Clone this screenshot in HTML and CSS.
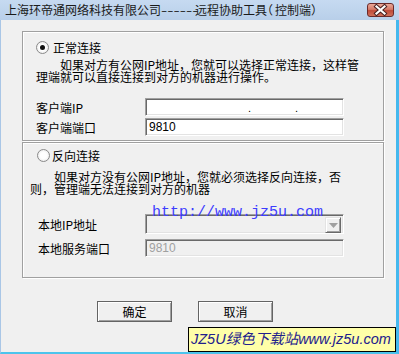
FILE: index.html
```html
<!DOCTYPE html>
<html>
<head>
<meta charset="utf-8">
<link rel="stylesheet" href="styles.css">
</head>
<body>
<div class="window">
  <div class="titlebar">
    <span class="title">上海环帝通网络科技有限公司<span class="dash">------</span>远程协助工具<span class="po">（</span>控制端）</span>
    <div class="close">
      <svg width="27" height="14" viewBox="0 0 27 14">
        <path d="M9.5 3.5 L17.5 10.5 M17.5 3.5 L9.5 10.5" stroke="#4a2222" stroke-width="4.2" stroke-linecap="square"/>
        <path d="M9.5 3.5 L17.5 10.5 M17.5 3.5 L9.5 10.5" stroke="#fff" stroke-width="2.2" stroke-linecap="square"/>
      </svg>
    </div>
  </div>
  <div class="client">
    <div class="group g1">
      <div class="radio-row"><span class="radio checked"></span><span class="rlabel">正常连接</span></div>
      <p class="desc">　　如果对方有公网IP地址，您就可以选择正常连接，这样管<br>理端就可以直接连接到对方的机器进行操作。</p>
      <div class="field f1"><span class="label">客户端IP</span><div class="input ip"><span class="dot d1">.</span><span class="dot d2">.</span></div></div>
      <div class="field f2"><span class="label">客户端端口</span><div class="input">9810</div></div>
    </div>
    <div class="group g2">
      <div class="radio-row"><span class="radio"></span><span class="rlabel">反向连接</span></div>
      <p class="desc">　　如果对方没有公网IP地址，您就必须选择反向连接，否<br>则，管理端无法连接到对方的机器</p>
      <div class="field f3"><span class="label">本地IP地址</span><div class="combo"><div class="cbtn"><svg width="9" height="5" viewBox="0 0 9 5"><path d="M0 0 H9 L4.5 5 Z" fill="#a0a0a0"/></svg></div></div></div>
      <div class="field f4"><span class="label">本地服务端口</span><div class="input disabled">9810</div></div>
    </div>
    <div class="buttons">
      <div class="btn">确定</div>
      <div class="btn">取消</div>
    </div>
    <div class="url">http://www.jz5u.com</div>
    <div class="wm">JZ5U绿色下载站www.jz5u.com</div>
  </div>
</div>
</body>
</html>
```
FILE: styles.css
```css
html, body {
  margin: 0;
  padding: 0;
  background: #f0f0f0;
}
body {
  width: 399px;
  height: 354px;
  overflow: hidden;
  font-family: "Noto Sans CJK SC", "Liberation Sans", sans-serif;
  font-size: 12px;
  color: #000;
}
.window {
  width: 399px;
  height: 354px;
  display: flex;
  flex-direction: column;
  box-sizing: border-box;
}
.titlebar {
  height: 20px;
  flex: none;
  display: flex;
  align-items: center;
  justify-content: space-between;
  background: linear-gradient(#c6daf1, #b8cfe9);
  padding-left: 5px;
  padding-right: 5px;
  box-sizing: border-box;
}
.title {
  font-size: 12px;
  line-height: 20px;
  color: #1a1a1a;
  white-space: nowrap;
}
.dash {
  display: inline-block;
  transform: scaleX(1.5);
  transform-origin: left center;
  margin-right: 9px;
}
.po {
  font-feature-settings: "halt" 1;
  padding-right: 2px;
}
.close {
  width: 27px;
  height: 14px;
  box-sizing: border-box;
  border: 1px solid #6b2a2a;
  border-radius: 3px;
  background: linear-gradient(#eaa898 0%, #d67a68 45%, #c04a38 55%, #d0705a 100%);
  display: flex;
  align-items: center;
  justify-content: center;
  overflow: hidden;
}
.close svg { display: block; margin: -1px; }
.client {
  flex: 1;
  position: relative;
  background: #f0f0f0;
  border-left: 1px solid #a9c6e6;
  border-right: 3px solid #45b8ee;
  border-bottom: 2px solid #4cc4ec;
  padding-top: 11px;
  padding-left: 21px;
  box-sizing: border-box;
}
.group {
  width: 362px;
  box-sizing: border-box;
  border: 1px solid #a0a0a0;
  box-shadow: inset 1px 1px #fff, 1px 1px #fff;
  display: flex;
  flex-direction: column;
}
.g1 { height: 110px; padding-top: 9px; }
.g2 { height: 136px; padding-top: 6px; margin-top: 1px; }
.radio-row {
  display: flex;
  align-items: center;
  height: 13px;
  padding-left: 13px;
}
.g2 .radio-row { padding-left: 14px; }
.radio {
  width: 13px;
  height: 13px;
  box-sizing: border-box;
  border-radius: 50%;
  border: 1px solid #8a8a8a;
  background: radial-gradient(circle at 50% 50%, #ffffff 40%, #e2e2e2 100%);
  position: relative;
  flex: none;
}
.radio.checked::after {
  content: "";
  position: absolute;
  left: 3px;
  top: 3px;
  width: 5px;
  height: 5px;
  border-radius: 50%;
  background: #111;
}
.rlabel {
  margin-left: 4px;
  line-height: 13px;
}
.g2 .rlabel { margin-left: 2px; }
.desc {
  margin: 5px 0 0 0;
  padding-left: 13px;
  line-height: 12px;
  white-space: nowrap;
}
.g2 .desc { margin-top: 9px; padding-left: 7px; }
.field {
  display: flex;
  align-items: center;
  padding-left: 13px;
}
.field .label { width: 109px; flex: none; }
.f1 { margin-top: 15px; }
.f2 { margin-top: 2px; }
.f3 { margin-top: 19px; padding-left: 15px; }
.f3 .label, .f4 .label { width: 107px; }
.f4 { margin-top: 5px; padding-left: 15px; }
.input {
  width: 199px;
  height: 18px;
  box-sizing: border-box;
  border: 1px solid;
  border-color: #a0a0a0 #ffffff #ffffff #a0a0a0;
  box-shadow: inset 1px 1px #696969, inset -1px -1px #e3e3e3;
  background: #fff;
  font-family: "Liberation Sans", sans-serif;
  font-size: 12px;
  line-height: 16px;
  padding-left: 3px;
  position: relative;
}
.input.disabled {
  background: #f0f0f0;
  color: #a0a0a0;
}
.dot {
  position: absolute;
  top: 1px;
  font-size: 11px;
}
.d1 { left: 102px; }
.d2 { left: 149px; }
.combo {
  width: 199px;
  height: 20px;
  box-sizing: border-box;
  border: 1px solid;
  border-color: #a0a0a0 #ffffff #ffffff #a0a0a0;
  box-shadow: inset 1px 1px #696969, inset -1px -1px #e3e3e3;
  background: #f0f0f0;
  display: flex;
  justify-content: flex-end;
  padding: 2px;
}
.cbtn {
  width: 16px;
  height: 16px;
  box-sizing: border-box;
  background: #f0f0f0;
  border: 1px solid;
  border-color: #e3e3e3 #696969 #696969 #e3e3e3;
  box-shadow: inset 1px 1px #fff, inset -1px -1px #a0a0a0;
  display: flex;
  align-items: center;
  justify-content: center;
}
.cbtn svg { display: block; }
.buttons {
  display: flex;
  gap: 26px;
  margin-top: 23px;
  margin-left: 75px;
}
.btn {
  width: 75px;
  height: 21px;
  box-sizing: border-box;
  border: 1px solid #646464;
  box-shadow: inset 1px 1px #fff, inset -1px -1px #a0a0a0;
  background: #f0f0f0;
  text-align: center;
  line-height: 19px;
}
.url {
  position: absolute;
  left: 151px;
  top: 185px;
  font-family: "Liberation Mono", monospace;
  font-size: 15px;
  line-height: 16px;
  color: #3d3dff;
  white-space: nowrap;
}
.wm {
  position: absolute;
  left: 187px;
  top: 307px;
  width: 208px;
  height: 25px;
  box-sizing: border-box;
  border: 1px solid #000;
  background: #ffffa8;
  font-family: "Liberation Sans", "Noto Sans CJK SC", sans-serif;
  font-style: italic;
  font-size: 14.5px;
  line-height: 23px;
  color: #22208c;
  padding-left: 2px;
  white-space: nowrap;
  overflow: hidden;
}
```
